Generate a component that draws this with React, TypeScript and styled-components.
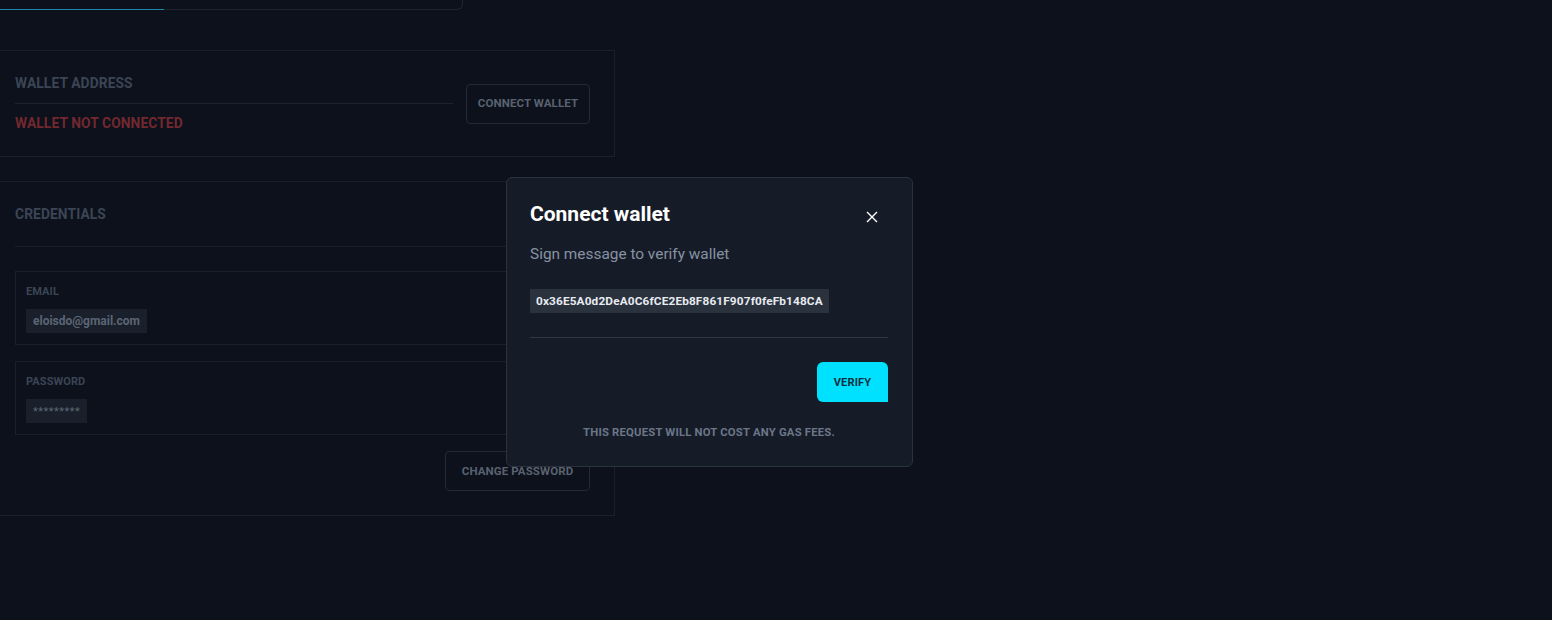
import React from "react";
import styled, { createGlobalStyle } from "styled-components";

const Global = createGlobalStyle`
  html, body { margin: 0; padding: 0; background: #0c111b; }
  body { font-family: Roboto, "Liberation Sans", Arial, sans-serif; overflow: hidden; }
  * { box-sizing: border-box; }
`;

const Page = styled.div`
  position: relative;
  width: 1552px;
  height: 620px;
  background: #0c111b;
`;

const Column = styled.div`
  display: flex;
  flex-direction: column;
  width: 616px;
  margin-left: -1px;
`;

const TabBar = styled.div`
  display: flex;
  align-items: flex-end;
  width: 463px;
  height: 10px;
  margin-left: 1px;
  border-right: 1px solid #1d2330;
  border-bottom: 1px solid #1d2330;
  border-bottom-right-radius: 6px;
`;

const ActiveTab = styled.div`
  width: 164px;
  height: 1px;
  margin-bottom: -1px;
  background: #1a89a8;
`;

const Card = styled.section<{ $top: number }>`
  margin-top: ${(p) => p.$top}px;
  border: 1px solid #1a202b;
  padding: 0 24px 0 15px;
`;

const WalletRow = styled.div`
  display: flex;
  align-items: center;
  gap: 13px;
`;

const WalletInfo = styled.div`
  flex: 0 0 438px;
  padding: 25px 0 26px;
`;

const Label = styled.div<{ $size?: number; $color?: string }>`
  font-size: ${(p) => p.$size ?? 13.8}px;
  line-height: 14px;
  font-weight: 700;
  letter-spacing: 0.1px;
  color: ${(p) => p.$color ?? "#3b4555"};
  text-transform: uppercase;
`;

const Rule = styled.div<{ $top: number; $bottom: number; $color?: string }>`
  height: 1px;
  background: ${(p) => p.$color ?? "#1c2230"};
  margin: ${(p) => p.$top}px 0 ${(p) => p.$bottom}px;
`;

const GhostButton = styled.button<{ $width: number }>`
  width: ${(p) => p.$width}px;
  height: 40px;
  padding: 0 0 1px;
  background: transparent;
  border: 1px solid #232a36;
  border-radius: 4px;
  font-family: inherit;
  font-size: 11.5px;
  font-weight: 700;
  color: #5a6271;
  text-transform: uppercase;
  letter-spacing: 0.1px;
`;

const CardHeader = styled.div`
  height: 65px;
  display: flex;
  align-items: center;
  border-bottom: 1px solid #1a202b;
`;

const FieldList = styled.div`
  display: flex;
  flex-direction: column;
  gap: 16px;
  margin-top: 24px;
`;

const Field = styled.div`
  border: 1px solid #1a202b;
  padding: 13px 10px 11px;
  display: flex;
  flex-direction: column;
  align-items: flex-start;
  gap: 10px;
`;

const Chip = styled.span<{ $mono?: boolean }>`
  display: inline-flex;
  align-items: center;
  height: 24px;
  padding: 0 7px;
  background: #19202b;
  color: #5c6574;
  font-size: ${(p) => (p.$mono ? 11 : 12)}px;
  font-weight: ${(p) => (p.$mono ? 400 : 700)};
  letter-spacing: ${(p) => (p.$mono ? 0.5 : 0)}px;
`;

const Actions = styled.div`
  display: flex;
  justify-content: flex-end;
  margin: 16px 0 24px;
`;

const Modal = styled.div`
  position: absolute;
  left: 506px;
  top: 177px;
  width: 407px;
  height: 290px;
  background: #161c27;
  border: 1px solid #2a323e;
  border-radius: 6px;
  padding: 24px 24px 0 23px;
  display: flex;
  flex-direction: column;
`;

const ModalHead = styled.div`
  display: flex;
  justify-content: space-between;
  align-items: center;
  height: 24px;
`;

const Title = styled.h2`
  margin: 0;
  font-size: 21px;
  line-height: 24px;
  font-weight: 700;
  color: #ffffff;
`;

const Close = styled.button`
  width: 12px;
  height: 12px;
  margin: 5px 10px 0 0;
  padding: 0;
  border: 0;
  background: transparent;
  display: flex;
  color: #ffffff;
`;

const Sub = styled.p`
  margin: 18px 0 0;
  font-size: 15.4px;
  line-height: 20px;
  color: #8692a3;
`;

const Address = styled.div`
  align-self: flex-start;
  margin-top: 25px;
  height: 24px;
  padding: 0 6px;
  display: flex;
  align-items: center;
  background: #2a323e;
  color: #e8ebf0;
  font-size: 11.8px;
  font-weight: 700;
  letter-spacing: 0.15px;
`;

const ModalActions = styled.div`
  display: flex;
  justify-content: flex-end;
  margin-top: 24px;
`;

const Primary = styled.button`
  width: 71px;
  height: 40px;
  padding: 0;
  border: 0;
  border-radius: 6px 6px 0 6px;
  background: #00e1ff;
  color: #0b3040;
  font-family: inherit;
  font-size: 11px;
  font-weight: 700;
  letter-spacing: 0.2px;
`;

const Note = styled.p`
  margin: 24px 0 0;
  text-align: center;
  font-size: 11.3px;
  line-height: 14px;
  font-weight: 700;
  letter-spacing: 0.2px;
  color: #6b7689;
`;

export default function App() {
  return (
    <Page>
      <Global />
      <Column>
        <TabBar>
          <ActiveTab />
        </TabBar>

        <Card $top={40}>
          <WalletRow>
            <WalletInfo>
              <Label>Wallet address</Label>
              <Rule $top={13} $bottom={12} />
              <Label $color="#72282f">Wallet not connected</Label>
            </WalletInfo>
            <GhostButton $width={125}>Connect wallet</GhostButton>
          </WalletRow>
        </Card>

        <Card $top={24}>
          <CardHeader>
            <Label>Credentials</Label>
          </CardHeader>
          <FieldList>
            <Field>
              <Label $size={11}>Email</Label>
              <Chip>eloisdo@gmail.com</Chip>
            </Field>
            <Field>
              <Label $size={11}>Password</Label>
              <Chip $mono>*********</Chip>
            </Field>
          </FieldList>
          <Actions>
            <GhostButton $width={145}>Change password</GhostButton>
          </Actions>
        </Card>
      </Column>

      <Modal>
        <ModalHead>
          <Title>Connect wallet</Title>
          <Close aria-label="Close">
            <svg width="12" height="12" viewBox="0 0 12 12" fill="none">
              <path d="M1 1L11 11M11 1L1 11" stroke="currentColor" strokeWidth="1.4" />
            </svg>
          </Close>
        </ModalHead>
        <Sub>Sign message to verify wallet</Sub>
        <Address>0x36E5A0d2DeA0C6fCE2Eb8F861F907f0feFb148CA</Address>
        <Rule $top={24} $bottom={0} $color="#2d3643" />
        <ModalActions>
          <Primary>VERIFY</Primary>
        </ModalActions>
        <Note>THIS REQUEST WILL NOT COST ANY GAS FEES.</Note>
      </Modal>
    </Page>
  );
}
